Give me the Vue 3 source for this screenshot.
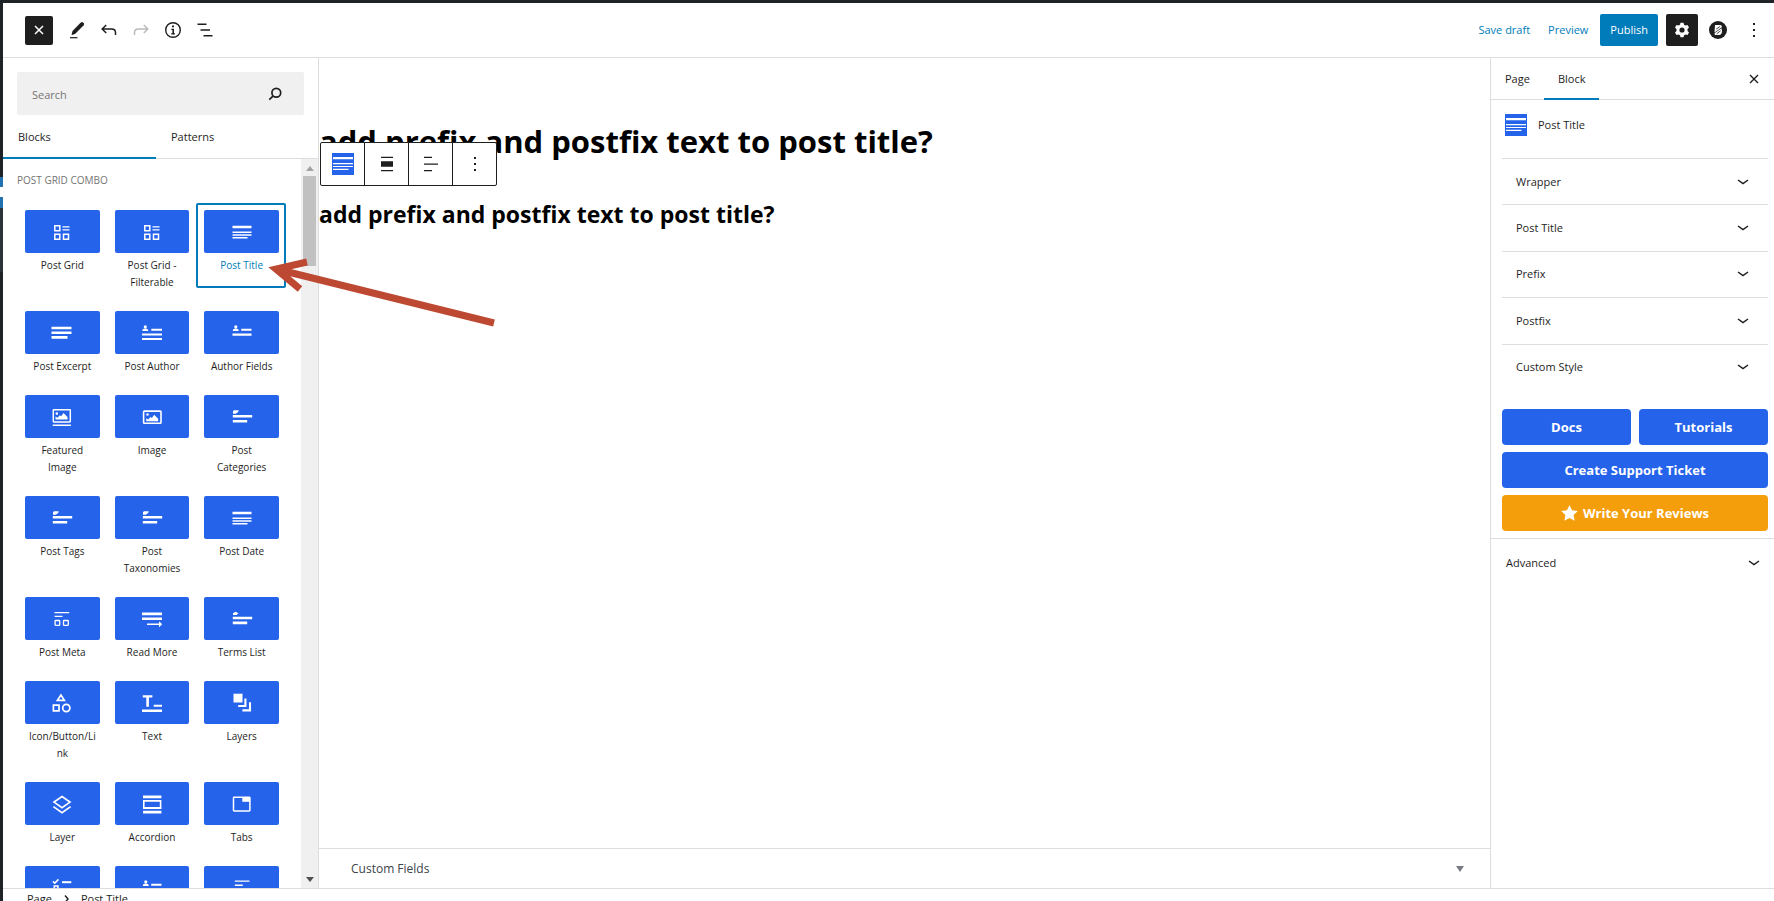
<script setup>
import { ref } from 'vue'

const blocks = [
  { name: 'Post Grid', icon: 'grid' },
  { name: 'Post Grid - Filterable', icon: 'grid' },
  { name: 'Post Title', icon: 'title' },
  { name: 'Post Excerpt', icon: 'excerpt' },
  { name: 'Post Author', icon: 'author' },
  { name: 'Author Fields', icon: 'fields' },
  { name: 'Featured Image', icon: 'featured' },
  { name: 'Image', icon: 'image' },
  { name: 'Post Categories', icon: 'tag' },
  { name: 'Post Tags', icon: 'tag' },
  { name: 'Post Taxonomies', icon: 'tag' },
  { name: 'Post Date', icon: 'title' },
  { name: 'Post Meta', icon: 'meta' },
  { name: 'Read More', icon: 'more' },
  { name: 'Terms List', icon: 'terms' },
  { name: 'Icon/Button/Link', icon: 'shapes' },
  { name: 'Text', icon: 'text' },
  { name: 'Layers', icon: 'layers' },
  { name: 'Layer', icon: 'layer' },
  { name: 'Accordion', icon: 'accordion' },
  { name: 'Tabs', icon: 'tabs' },
  { name: '', icon: 'checks', label: 'List' },
  { name: '', icon: 'fields', label: 'User Fields' },
  { name: '', icon: 'lines', label: 'Content' },
]

// f: filled shapes, s: stroked shapes, w: stroke width
const icons = {
  grid: {
    f: 'M12.5 6.3h7v1.2h-7zM12.5 9.3h7v1.3h-7z',
    s: 'M4.8 5.8h5v5h-5zM4.8 14.2h5v5h-5zM13.5 14.2h5v5h-5z',
    w: 1.5,
  },
  title: { f: 'M2.5 5.7h19v2.6h-19zM2.5 11.4h19v1.7h-19zM2.5 14.3h19v1.4h-19zM2.5 17.1h15v1.4h-15z' },
  excerpt: { f: 'M1.5 5.7h20v2.6h-20zM1.5 10.4h20v2.6h-20zM1.5 15.1h16v2.6h-16z' },
  author: {
    f: 'M5.3 4.2a1.6 1.6 0 1 1 0 3.2a1.6 1.6 0 0 1 0-3.2zM2.3 9.9c0-1.6 1.3-2.4 3-2.4s3 .8 3 2.4zM11.3 7.7H22v2.1H11.3zM2 12.4h20v2.2H2zM2 16.9h20v2.2H2z',
  },
  fields: {
    f: 'M5.8 4.2a1.6 1.6 0 1 1 0 3.2a1.6 1.6 0 0 1 0-3.2zM2.8 9.9c0-1.6 1.3-2.4 3-2.4s3 .8 3 2.4zM11.2 7.7h10.3v2.1H11.2zM2.5 12.4h19v2.3h-19z',
  },
  featured: {
    f: 'M5.5 14.5v-3l2 1.2l2.3-2.5l1.4 1l2.3-3.2l4 4v2.5zM6.8 7.3a1.3 1.3 0 1 1 0 2.6a1.3 1.3 0 0 1 0-2.6zM2.7 19.4h18.2v1.5H2.7z',
    s: 'M3.9 4.7h15.8q.6 0 .6.6v11q0 .6-.6.6H3.9q-.6 0-.6-.6v-11q0-.6.6-.6z',
    w: 1.5,
  },
  image: {
    f: 'M6.2 16.3v-3l2 1.2l2.3-2.5l1.4 1l2.3-3.2l4 4v2.5zM7.5 8.2a1.3 1.3 0 1 1 0 2.6a1.3 1.3 0 0 1 0-2.6z',
    s: 'M4.3 6.1h16q.7 0 .7.7v10.8q0 .7-.7.7h-16q-.7 0-.7-.7V6.8q0-.7.7-.7z',
    w: 1.6,
  },
  tag: { f: 'M4 5.3h4.7l-.5 1.6l-2.5 1.9H3V6.2zM2.8 10h19.4v2.4H2.8zM2.8 15h14.4v2.6H2.8z' },
  terms: { f: 'M5.5 4.8l3 1.4l-2 1.9H3V6.2zM2.8 9.8h19.4v2.4H2.8zM2.8 14.6h14.4v2.6H2.8z' },
  meta: {
    f: 'M4.5 5h14.7v1.2H4.5zM4.5 8.8h8V10h-8z',
    s: 'M5.6 13.5h3.6q.5 0 .5.5v3.8q0 .5-.5.5H5.6q-.5 0-.5-.5V14q0-.5.5-.5zM14 13.5h3.8q.5 0 .5.5v3.8q0 .5-.5.5H14q-.5 0-.5-.5V14q0-.5.5-.5z',
    w: 1.3,
  },
  more: { f: 'M2 5.6h20v2.6H2zM2 10.5h20v2.6H2zM7 16.4h12v-2.2l3.2 3l-3.2 3v-2.1H7z' },
  shapes: {
    s: 'M10.9 4l3.5 5.4H7.4zM3.4 14.2H9v5.6H3.4zM16.3 13.4a3.6 3.6 0 1 1 0 7.2a3.6 3.6 0 0 1 0-7.2z',
    w: 1.7,
  },
  text: { f: 'M2.8 4.3h9.6v2.2H8.9v9.2H6.3V6.5H2.8zM13.7 13.7H22v2h-8.3zM2 18.4h20v2.5H2z' },
  layers: { f: 'M3.5 2.7h9v8.8h-9z', s: 'M15.4 7.4v7.6H8.2M20 11.2v8.2h-7.6', w: 2.1 },
  layer: { s: 'M12 4.5l8 5.6l-8 5.6l-8-5.6zM3.4 14.6l8.6 6l8.6-6', w: 1.7 },
  accordion: {
    f: 'M3 3.5h18.4v2.7H3zM3 18.8h18.4v2.7H3zM3 15.4h18.4v1.5H3z',
    s: 'M3.8 8.9h16.8v6.8H3.8z',
    w: 1.6,
  },
  tabs: {
    f: 'M12.3 5h7.8v4.8h-7.8z',
    s: 'M4.2 5.2h15q.7 0 .7.7v12.4q0 .7-.7.7h-15q-.7 0-.7-.7V5.9q0-.7.7-.7z',
    w: 1.5,
  },
  checks: { f: 'M12 5.2h9.3v2H12z', s: 'M3 5.4l1.8 1.8l3.6-3.8M4.3 10h3.6v4H4.3z', w: 1.6 },
  lines: { f: 'M4.8 4.5h14.7v1.3H4.8zM4.8 8.6h8v1.3H4.8z' },
}

const panels = ['Wrapper', 'Post Title', 'Prefix', 'Postfix', 'Custom Style']
const selected = ref('Post Title')
const query = ref('')
</script>

<template>
  <div class="screen">
    <div class="admin-edge">
      <span class="edge-top"></span>
      <span class="edge-current"></span>
      <span class="edge-sub"></span>
      <span class="edge-rest"></span>
    </div>

    <div class="editor">
      <header class="topbar">
        <div class="tools">
          <button class="inserter" aria-label="Close block inserter">
            <svg width="10" height="10" viewBox="0 0 10 10"><path d="M1 1l8 8M9 1l-8 8" stroke="#fff" stroke-width="1.5" /></svg>
          </button>
          <button class="tool" aria-label="Edit">
            <svg width="18" height="18" viewBox="0 0 18 18">
              <path d="M3.5 14.2l1-4.2L12.8 1.500l1.500-.6l1.900 1.700l-.5 1.700l-8.400 8.500z" fill="#1e1e1e" />
              <path d="M2 16.700h7.500" stroke="#1e1e1e" stroke-width="1.200" />
            </svg>
          </button>
          <button class="tool" aria-label="Undo">
            <svg width="18" height="18" viewBox="0 0 18 18"><path d="M6.200 4L2.200 8l4 4M2.500 8h9q4 0 4 3.500V14" fill="none" stroke="#1e1e1e" stroke-width="1.500" /></svg>
          </button>
          <button class="tool" aria-label="Redo" disabled>
            <svg width="18" height="18" viewBox="0 0 18 18"><path d="M11.800 4l4 4l-4 4M15.500 8h-9q-4 0-4 3.500V14" fill="none" stroke="#bbb" stroke-width="1.500" /></svg>
          </button>
          <button class="tool" aria-label="Details">
            <svg width="18" height="18" viewBox="0 0 18 18">
              <circle cx="9" cy="9" r="7.300" fill="none" stroke="#1e1e1e" stroke-width="1.400" />
              <path d="M8 4.500h2v1.700H8zM7.300 7.700H10v4.500h1v1.200H7.200v-1.200h1.200V8.900H7.300z" fill="#1e1e1e" />
            </svg>
          </button>
          <button class="tool" aria-label="List View">
            <svg width="18" height="18" viewBox="0 0 18 18"><path d="M1.500 3.200h9M4.500 9H14M7.500 14.700h9" stroke="#1e1e1e" stroke-width="1.400" /></svg>
          </button>
        </div>
        <div class="actions">
          <button class="link">Save draft</button>
          <button class="link">Preview</button>
          <button class="publish">Publish</button>
          <button class="settings" aria-label="Settings">
            <svg width="16" height="16" viewBox="0 0 16 16">
              <path d="M6.500 .8h3l.5 2l1.500.8l2-.6l1.500 2.500l-1.500 1.500v2l1.500 1.500l-1.500 2.500l-2-.6l-1.500.8l-.5 2h-3l-.5-2l-1.500-.8l-2 .6L1 10.500L2.500 9V7L1 5.500L2.500 3l2 .6L6 2.800z" fill="#fff" />
              <circle cx="8" cy="8" r="2.600" fill="#1e1e1e" />
            </svg>
          </button>
          <button class="plugin" aria-label="Page tools">
            <svg width="18" height="18" viewBox="0 0 18 18">
              <circle cx="9" cy="9" r="9" fill="#1e1e1e" />
              <path d="M6 4h5.500q1.800.3 1.300 2.200L5.500 11.600zM12.600 7.200q1.400 5.500-2 6.900H6.200q-1.200-.8-.4-2.200z" fill="#fff" />
              <path d="M7.200 8.200l4-2.800M7.600 12.800l4-3" stroke="#1e1e1e" stroke-width=".8" />
            </svg>
          </button>
          <button class="dots" aria-label="Options">
            <svg width="4" height="14" viewBox="0 0 4 14"><path d="M1 0h2v2H1zM1 6h2v2H1zM1 12h2v2H1z" fill="#1e1e1e" /></svg>
          </button>
        </div>
      </header>

      <div class="body">
        <aside class="library">
          <label class="search">
            <input v-model="query" type="search" placeholder="Search" aria-label="Search" />
            <svg width="14" height="14" viewBox="0 0 14 14">
              <circle cx="8.300" cy="5.700" r="4.400" fill="none" stroke="#1e1e1e" stroke-width="1.700" />
              <path d="M5.200 8.800L1.300 12.600" stroke="#1e1e1e" stroke-width="1.700" />
            </svg>
          </label>
          <div class="tabs" role="tablist">
            <button class="tab active" role="tab" aria-selected="true">Blocks</button>
            <button class="tab" role="tab" aria-selected="false">Patterns</button>
          </div>
          <div class="scroller">
            <div class="list">
              <h2 class="category">Post Grid Combo</h2>
              <div class="blocks">
                <button
                  v-for="(b, i) in blocks"
                  :key="i"
                  class="block"
                  :class="{ selected: b.name === selected }"
                  :aria-label="b.label"
                  @click="selected = b.name"
                >
                  <span class="tile">
                    <svg width="24" height="24" viewBox="0 0 24 24">
                      <path v-if="icons[b.icon].f" :d="icons[b.icon].f" fill="#fff" />
                      <path v-if="icons[b.icon].s" :d="icons[b.icon].s" fill="none" stroke="#fff" :stroke-width="icons[b.icon].w" />
                    </svg>
                  </span>
                  <span class="name">{{ b.name }}</span>
                </button>
              </div>
            </div>
            <div class="scrollbar">
              <svg width="8" height="5" viewBox="0 0 8 5"><path d="M4 0l4 5H0z" fill="#a3a3a3" /></svg>
              <span class="thumb"></span>
              <svg width="8" height="5" viewBox="0 0 8 5"><path d="M0 0h8L4 5z" fill="#505050" /></svg>
            </div>
          </div>
        </aside>

        <main class="content">
          <div class="canvas">
            <h1>add prefix and postfix text to post title?</h1>
            <h2>add prefix and postfix text to post title?</h2>
            <div class="toolbar" role="toolbar" aria-label="Block tools">
              <button aria-label="Post Title">
                <svg width="22" height="22" viewBox="0 0 22 22">
                  <path d="M0 0h22v22H0z" fill="#2563eb" />
                  <path d="M1 4h20v2.300H1zM1 10h20v1.300H1zM1 13h20v1.100H1zM1 15.800h15.500V17H1z" fill="#fff" />
                </svg>
              </button>
              <button aria-label="Align">
                <svg width="16" height="16" viewBox="0 0 16 16"><path d="M2 .7h12v1.200H2zM2 5.200h12v5.600H2zM2 14h12v1.200H2z" fill="#1e1e1e" /></svg>
              </button>
              <button aria-label="Align text">
                <svg width="16" height="16" viewBox="0 0 16 16"><path d="M1 .7h8v1.200H1zM1 7.400h14v1.300H1zM1 14h8v1.200H1z" fill="#1e1e1e" /></svg>
              </button>
              <button aria-label="Options">
                <svg width="4" height="14" viewBox="0 0 4 14"><path d="M1 0h2v2H1zM1 6h2v2H1zM1 12h2v2H1z" fill="#1e1e1e" /></svg>
              </button>
            </div>
          </div>
          <button class="metabox">
            <span>Custom Fields</span>
            <svg width="8" height="6" viewBox="0 0 8 6"><path d="M0 0h8L4 6z" fill="#787c82" /></svg>
          </button>
        </main>

        <aside class="inspector">
          <div class="inspector-tabs" role="tablist">
            <button class="itab" role="tab" aria-selected="false">Page</button>
            <button class="itab active" role="tab" aria-selected="true">Block</button>
            <button class="close" aria-label="Close settings">
              <svg width="10" height="10" viewBox="0 0 10 10"><path d="M1 1l8 8M9 1l-8 8" stroke="#1e1e1e" stroke-width="1.400" /></svg>
            </button>
          </div>
          <div class="card">
            <svg width="22" height="22" viewBox="0 0 22 22">
              <path d="M0 0h22v22H0z" fill="#2563eb" />
              <path d="M1 4h20v2.300H1zM1 10h20v1.300H1zM1 13h20v1.100H1zM1 15.800h15.500V17H1z" fill="#fff" />
            </svg>
            <span>Post Title</span>
          </div>
          <div class="panels">
            <button v-for="p in panels" :key="p" class="panel">
              <span>{{ p }}</span>
              <svg width="12" height="6" viewBox="0 0 12 6"><path d="M1 1l5 3.600L11 1" fill="none" stroke="#1e1e1e" stroke-width="1.500" /></svg>
            </button>
          </div>
          <div class="help">
            <a href="#docs">Docs</a>
            <a href="#tutorials">Tutorials</a>
            <a href="#support" class="wide">Create Support Ticket</a>
            <a href="#reviews" class="wide review">
              <svg width="17" height="16" viewBox="0 0 17 16"><path d="M8.500 0l2.500 5.200l5.800.8l-4.200 4l1 5.800l-5.100-2.800l-5.100 2.800l1-5.800L.2 6L6 5.200z" fill="#fff" /></svg>
              Write Your Reviews
            </a>
          </div>
          <button class="advanced">
            <span>Advanced</span>
            <svg width="12" height="6" viewBox="0 0 12 6"><path d="M1 1l5 3.600L11 1" fill="none" stroke="#1e1e1e" stroke-width="1.500" /></svg>
          </button>
        </aside>
      </div>

      <footer class="crumbs">
        <button>Page</button>
        <svg width="5" height="8" viewBox="0 0 5 8"><path d="M1 .5L4 4L1 7.500" fill="none" stroke="#1e1e1e" stroke-width="1.400" /></svg>
        <span>Post Title</span>
      </footer>
    </div>

    <svg class="pointer" width="230" height="74" viewBox="0 0 230 74" aria-hidden="true">
      <path d="M8 13L226 67M39 6L8 13L32 33" fill="none" stroke="#bd4932" stroke-width="7" />
    </svg>
  </div>
</template>

<style>
body {
  margin: 0;
  background: #fff;
}
</style>

<style scoped>
.screen {
  position: relative;
  display: flex;
  height: 100vh;
  overflow: hidden;
  font-family: "Open Sans", "Noto Sans", sans-serif;
  font-size: 11px;
  line-height: 16px;
  color: #1e1e1e;
}
.screen * {
  box-sizing: border-box;
}
svg {
  display: block;
  flex: none;
}
button {
  padding: 0;
  border: 0;
  background: none;
  font: inherit;
  color: inherit;
  cursor: pointer;
}
.admin-edge {
  display: flex;
  flex-direction: column;
  width: 3px;
  background: #1d2327;
}
.edge-top {
  height: 177px;
}
.edge-current {
  height: 31px;
  background: linear-gradient(#2271b1 10px, #fff 10px, #fff 20px, #2271b1 20px);
}
.edge-sub {
  height: 64px;
  background: #2c3338;
}
.edge-rest {
  flex: 1;
}
.editor {
  display: flex;
  flex: 1;
  flex-direction: column;
  min-width: 0;
  border-top: 3px solid #1d2327;
}
.topbar {
  display: flex;
  align-items: center;
  justify-content: space-between;
  height: 55px;
  padding: 0 10px 0 22px;
  border-bottom: 1px solid #ddd;
}
.tools,
.actions {
  display: flex;
  align-items: center;
}
.tools {
  gap: 14px;
}
.tool,
.inserter,
.settings {
  display: flex;
  align-items: center;
  justify-content: center;
}
.inserter {
  width: 28px;
  height: 29px;
  margin-right: 1px;
  border-radius: 2px;
  background: #1e1e1e;
}
.link {
  margin-right: 18px;
  color: #007cba;
}
.publish {
  height: 32px;
  margin-right: 8px;
  padding: 0 10px;
  border-radius: 2px;
  background: #007cba;
  color: #fff;
}
.link + .publish {
  margin-left: -6px;
}
.settings {
  width: 32px;
  height: 32px;
  margin-right: 11px;
  border-radius: 2px;
  background: #1e1e1e;
}
.dots {
  display: flex;
  justify-content: center;
  width: 20px;
  margin-left: 17px;
}
.body {
  display: flex;
  flex: 1;
  min-height: 0;
}
.library {
  display: flex;
  flex: none;
  flex-direction: column;
  width: 316px;
  border-right: 1px solid #ddd;
}
.search {
  display: flex;
  align-items: center;
  height: 43px;
  margin: 14px 14px 0;
  padding: 0 22px 0 15px;
  border-radius: 2px;
  background: #f0f0f0;
}
.search input {
  flex: 1;
  min-width: 0;
  padding: 2px 0 0;
  border: 0;
  outline: 0;
  background: none;
  font: inherit;
}
.search input::placeholder {
  color: #757575;
  opacity: 1;
}
.tabs {
  display: flex;
  height: 44px;
  border-bottom: 1px solid #ddd;
}
.tab {
  width: 153px;
  height: 44px;
  padding: 2px 0 0 15px;
  border-bottom: 2px solid transparent;
  text-align: left;
}
.tab.active {
  border-bottom-color: #007cba;
}
.scroller {
  display: flex;
  flex: 1;
  min-height: 0;
}
.list {
  flex: 1;
  min-width: 0;
  overflow: hidden;
  padding: 13px 15px 0 14px;
}
.category {
  margin: 0 0 15px;
  font-size: 10px;
  font-weight: 400;
  line-height: 16px;
  text-transform: uppercase;
  color: #757575;
}
.blocks {
  display: grid;
  grid-template-columns: repeat(3, 1fr);
  gap: 16px 0;
}
.block {
  display: flex;
  flex-direction: column;
  padding: 7px 7px 0 8px;
  border-radius: 2px;
}
.block.selected {
  color: #007cba;
  box-shadow: inset 0 0 0 2px #007cba;
}
.tile {
  display: flex;
  align-items: center;
  justify-content: center;
  align-self: stretch;
  height: 43px;
  border-radius: 2px;
  background: #2563eb;
}
.name {
  align-self: stretch;
  margin: 4px 0 -3px;
  padding: 0 3px;
  font-size: 10px;
  line-height: 17px;
  text-align: center;
  overflow-wrap: anywhere;
}
.scrollbar {
  display: flex;
  flex-direction: column;
  align-items: center;
  width: 17px;
  padding: 7px 0 6px;
  background: #f0f0f0;
}
.thumb {
  width: 13px;
  height: 90px;
  margin: 5px 0 auto;
  background: #c1c1c1;
}
.content {
  display: flex;
  flex: 1;
  flex-direction: column;
  min-width: 0;
}
.canvas {
  position: relative;
  flex: 1;
  overflow: hidden;
  color: #000;
}
.canvas h1 {
  margin: 62px 0 0;
  font-size: 31px;
  line-height: 42px;
}
.canvas h2 {
  margin: 37px 0 0;
  font-size: 23px;
  line-height: 30px;
}
.toolbar {
  position: absolute;
  top: 84px;
  left: 1px;
  display: flex;
  height: 44px;
  border: 1px solid #1e1e1e;
  border-radius: 2px;
  background: #fff;
}
.toolbar button {
  display: flex;
  align-items: center;
  justify-content: center;
  width: 43px;
}
.toolbar button + button {
  width: 44px;
  border-left: 1px solid #1e1e1e;
}
.metabox {
  display: flex;
  align-items: center;
  justify-content: space-between;
  height: 40px;
  padding: 0 26px 0 32px;
  border-top: 1px solid #ddd;
  font-size: 12px;
  color: #3c434a;
}
.inspector {
  display: flex;
  flex: none;
  flex-direction: column;
  width: 284px;
  border-left: 1px solid #ddd;
}
.inspector-tabs {
  display: flex;
  height: 42px;
  border-bottom: 1px solid #ddd;
}
.itab {
  height: 42px;
  padding: 2px 14px 0;
  border-bottom: 2px solid transparent;
}
.itab.active {
  border-bottom-color: #007cba;
}
.close {
  margin: 0 15px 0 auto;
}
.card {
  display: flex;
  gap: 11px;
  align-items: center;
  height: 58px;
  padding: 0 14px 8px;
}
.panels {
  display: grid;
  grid-template-rows: repeat(5, 1fr);
  height: 232px;
  padding: 0 6px 0 11px;
}
.panel,
.advanced {
  display: flex;
  align-items: center;
  justify-content: space-between;
  width: 100%;
}
.panel {
  padding: 0 19px 0 14px;
  border-top: 1px solid #ddd;
}
.help {
  display: grid;
  grid-template-columns: 1fr 1fr;
  gap: 7px 8px;
  padding: 19px 6px 7px 11px;
}
.help a {
  display: flex;
  gap: 5px;
  align-items: center;
  justify-content: center;
  height: 36px;
  border-radius: 4px;
  background: #2563eb;
  color: #fff;
  font-size: 13px;
  font-weight: 700;
  text-decoration: none;
}
.help .wide {
  grid-column: 1 / -1;
}
.help .review {
  background: #f59e0b;
}
.advanced {
  height: 48px;
  padding: 0 14px 0 15px;
  border-top: 1px solid #ddd;
}
.crumbs {
  display: flex;
  gap: 12px;
  align-items: center;
  height: 13px;
  padding: 8px 24px 0;
  border-top: 1px solid #ddd;
}
.pointer {
  position: absolute;
  top: 256px;
  left: 268px;
  pointer-events: none;
}
</style>
